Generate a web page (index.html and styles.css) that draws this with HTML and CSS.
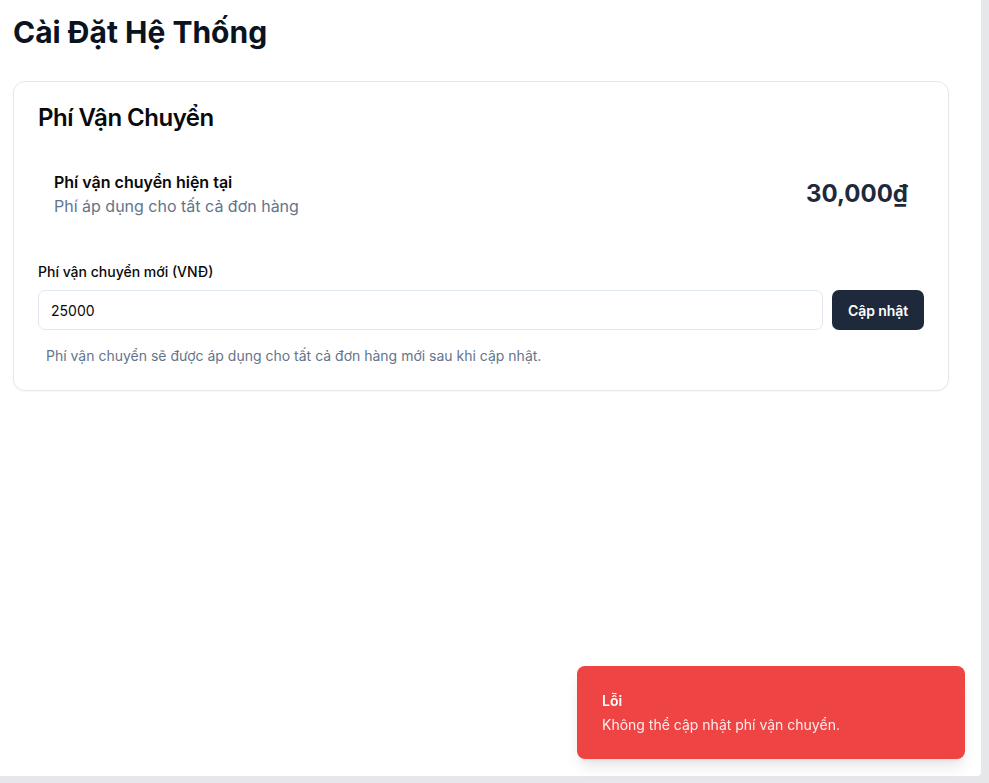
FILE: index.html
```html
<!DOCTYPE html>
<html lang="vi">
<head>
<meta charset="utf-8">
<title>Cài Đặt Hệ Thống</title>
<link rel="stylesheet" href="styles.css">
</head>
<body>
<main class="panel">
  <h1 class="page-title">Cài Đặt Hệ Thống</h1>
  <section class="card">
    <div class="card-header">
      <h2 class="card-title">Phí Vận Chuyển</h2>
    </div>
    <div class="card-content">
      <div class="current-fee">
        <div class="current-info">
          <div class="current-label">Phí vận chuyển hiện tại</div>
          <div class="current-desc">Phí áp dụng cho tất cả đơn hàng</div>
        </div>
        <div class="current-price">30,000₫</div>
      </div>
      <label class="field-label" for="fee">Phí vận chuyển mới (VNĐ)</label>
      <div class="field-row">
        <input id="fee" class="field-input" type="text" value="25000">
        <button class="btn-primary" type="button">Cập nhật</button>
      </div>
      <p class="field-help">Phí vận chuyển sẽ được áp dụng cho tất cả đơn hàng mới sau khi cập nhật.</p>
    </div>
  </section>
</main>
<div class="toast" role="alert">
  <div class="toast-title">Lỗi</div>
  <div class="toast-desc">Không thể cập nhật phí vận chuyển.</div>
</div>
</body>
</html>
```
FILE: styles.css
```css
* { box-sizing: border-box; }
html, body { margin: 0; padding: 0; }
body {
  background: #e6e7ea;
  font-family: Inter, "Noto Sans", sans-serif;
  color: #0a0a0a;
  height: 783px;
  overflow: hidden;
}
.panel {
  background: #ffffff;
  width: 981px;
  height: 776px;
  border-bottom-right-radius: 4px;
  padding: 14px 32px 0 13px;
}
.page-title {
  margin: 0 0 31px 0;
  font-size: 30px;
  line-height: 36px;
  font-weight: 700;
  color: #0b1220;
}
.card {
  width: 936px;
  border: 1px solid #e5e7eb;
  border-radius: 12px;
  background: #fff;
  box-shadow: 0 1px 2px rgba(0,0,0,0.04);
}
.card-header { padding: 24px 24px 24px 24px; }
.card-title {
  margin: 0;
  font-size: 24px;
  line-height: 24px;
  font-weight: 600;
  letter-spacing: -0.5px;
  color: #0a0a0a;
}
.card-content { padding: 0 24px 24px 24px; }
.current-fee {
  display: flex;
  align-items: center;
  justify-content: space-between;
  padding: 16px;
  margin-bottom: 28px;
}
.current-label {
  font-size: 16px;
  line-height: 24px;
  font-weight: 600;
  color: #0a0a0a;
}
.current-desc {
  font-size: 16px;
  line-height: 24px;
  color: #64748b;
}
.current-price {
  font-size: 24px;
  line-height: 32px;
  font-weight: 700;
  color: #1e293b;
}
.field-label {
  display: block;
  font-size: 14px;
  line-height: 20px;
  font-weight: 500;
  color: #0a0a0a;
  margin-bottom: 8px;
}
.field-row {
  display: flex;
  gap: 9px;
}
.field-input {
  flex: 1;
  height: 40px;
  border: 1px solid #e2e8f0;
  border-radius: 7px;
  padding: 0 12px;
  font-family: inherit;
  font-size: 14px;
  color: #0a0a0a;
  background: #fff;
  outline: none;
}
.btn-primary {
  height: 40px;
  padding: 0 16px;
  border: none;
  border-radius: 7px;
  background: #1e293b;
  color: #fff;
  font-family: inherit;
  font-size: 14px;
  font-weight: 600;
  letter-spacing: -0.1px;
}
.field-help {
  margin: 16px 0 0 0;
  padding: 0 8px;
  font-size: 14px;
  line-height: 20px;
  color: #64748b;
}
.toast {
  position: fixed;
  right: 24px;
  bottom: 24px;
  width: 388px;
  padding: 25px 25px 24px 25px;
  border-radius: 8px;
  background: #ef4444;
  color: #fff;
  box-shadow: 0 10px 15px -3px rgba(0,0,0,0.1), 0 4px 6px -4px rgba(0,0,0,0.1);
}
.toast-title {
  font-size: 14px;
  line-height: 20px;
  font-weight: 600;
}
.toast-desc {
  margin-top: 4px;
  font-size: 14px;
  line-height: 20px;
  opacity: 0.9;
}
```
